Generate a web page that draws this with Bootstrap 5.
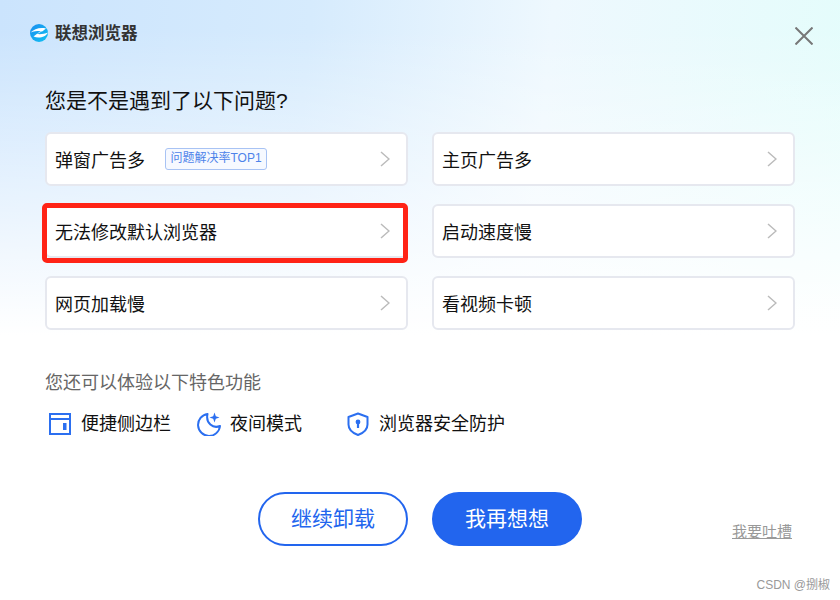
<!DOCTYPE html>
<html lang="zh-CN">
<head>
    <meta charset="UTF-8">
    <meta name="viewport" content="width=device-width, initial-scale=1.0">
    <title>联想浏览器</title>
    <link href="https://cdn.jsdelivr.net/npm/bootstrap@5.3.0/dist/css/bootstrap.min.css" rel="stylesheet">
    <style>
        html, body {
            height: 100%;
        }
        body {
            font-family: "Liberation Sans", "Noto Sans CJK SC", sans-serif;
            color: #111;
            background-color: #fff;
            overflow: hidden;
        }
        .dlg {
            position: relative;
            width: 840px;
            height: 600px;
            padding: 0 45px;
            background:
                linear-gradient(to bottom, rgba(255,255,255,0) 0, rgba(255,255,255,0) 30px, #fff 335px),
                linear-gradient(95deg, #cbe4fd 0%, #d6ebfd 35%, #eef8fe 62%, #e3fdfb 100%);
        }
        .dlg-head {
            height: 86px;
            margin-left: -15px;
            padding-top: 24px;
        }
        .brand-logo {
            width: 18px;
            height: 18px;
            margin-right: 7px;
        }
        .brand-name {
            font-size: 16.5px;
            font-weight: 700;
            line-height: 18px;
            color: #333;
        }
        .close-x {
            position: absolute;
            top: 27px;
            right: 27px;
            width: 18px;
            height: 18px;
        }
        .dlg-title {
            font-size: 21px;
            font-weight: 400;
            line-height: 30px;
            margin: 0 0 16px;
        }
        .issue-grid {
            display: grid;
            grid-template-columns: 363px 363px;
            column-gap: 24px;
            row-gap: 18px;
        }
        .issue {
            position: relative;
            height: 54px;
            padding: 0 16px 0 8px;
            background: #fff;
            border: 2px solid #e6e8ef;
            border-radius: 6px;
            font-size: 18px;
        }
        .issue-name {
            margin-top: 4px;
        }
        .issue-tag {
            margin-left: 20px;
            padding: 0 4.5px;
            height: 22px;
            line-height: 19px;
            font-size: 12px;
            color: #4d83ea;
            border: 1px solid #a8c3f4;
            border-radius: 3px;
            background: #f6f9ff;
        }
        .chev {
            width: 10px;
            height: 16px;
        }
        .red-mark {
            position: absolute;
            left: -5px;
            top: -3px;
            width: 366px;
            height: 60px;
            border: 5px solid #ff2316;
            border-radius: 5px;
            pointer-events: none;
        }
        .sub-title {
            font-size: 18px;
            line-height: 26px;
            color: #666;
            margin: 40px 0 15px;
        }
        .feat {
            font-size: 18px;
            line-height: 26px;
        }
        .feat svg {
            width: 24px;
            height: 24px;
            margin-right: 9px;
        }
        .feat-1 { margin-left: 3px; margin-right: 26px; }
        .feat-2 { margin-right: 44px; }
        .btn-row {
            margin-top: 55px;
            margin-left: 213px;
            gap: 24px;
        }
        .btn-pill {
            width: 150px;
            height: 54px;
            padding: 0;
            font-size: 21px;
            line-height: 50px;
            border-radius: 27px;
            border: 2px solid #2265ee;
        }
        .btn-ghost {
            color: #2265ee;
            background: #fff;
        }
        .btn-solid {
            color: #fff;
            background: #2265ee;
        }
        .tucao {
            position: absolute;
            left: 732px;
            top: 521px;
            font-size: 15px;
            line-height: 22px;
            color: #999;
        }
        .mark-csdn {
            position: absolute;
            right: 10px;
            top: 577px;
            font-size: 12px;
            line-height: 16px;
            color: #999;
        }
    </style>
</head>
<body>

<div class="dlg">
    <div class="dlg-head d-flex align-items-start">
        <svg class="brand-logo" viewBox="0 0 18 18">
            <defs>
                <linearGradient id="lg" x1="0" y1="0" x2="1" y2="1">
                    <stop offset="0" stop-color="#1a8df0"/>
                    <stop offset="1" stop-color="#12c3f2"/>
                </linearGradient>
            </defs>
            <circle cx="9" cy="9" r="9" fill="url(#lg)"/>
            <path d="M0.5 8.5C4 5 10 3 16 4.5L12.5 7.2C9 6.8 4.5 7.2 0.5 8.5Z" fill="#fff"/>
            <path d="M13.5 6.5L7 10C10.5 10.4 14.5 10 18 8.5C16 12.8 9 15 3.5 12.5L10 7.5Z" fill="#fff"/>
        </svg>
        <span class="brand-name">联想浏览器</span>
    </div>
    <svg class="close-x" viewBox="0 0 18 18">
        <path d="M0.5 0.5L17.5 17.5M17.5 0.5L0.5 17.5" stroke="#777" stroke-width="2" fill="none"/>
    </svg>

    <h1 class="dlg-title">您是不是遇到了以下问题?</h1>

    <div class="issue-grid">
        <div class="issue d-flex align-items-center">
            <span class="issue-name">弹窗广告多</span>
            <span class="issue-tag">问题解决率TOP1</span>
            <svg class="chev ms-auto" viewBox="0 0 10 16"><path d="M1 1L9 8L1 15" stroke="#bbb" stroke-width="1.5" fill="none"/></svg>
        </div>
        <div class="issue d-flex align-items-center">
            <span class="issue-name">主页广告多</span>
            <svg class="chev ms-auto" viewBox="0 0 10 16"><path d="M1 1L9 8L1 15" stroke="#bbb" stroke-width="1.5" fill="none"/></svg>
        </div>
        <div class="issue d-flex align-items-center">
            <span class="issue-name">无法修改默认浏览器</span>
            <svg class="chev ms-auto" viewBox="0 0 10 16"><path d="M1 1L9 8L1 15" stroke="#bbb" stroke-width="1.5" fill="none"/></svg>
            <div class="red-mark"></div>
        </div>
        <div class="issue d-flex align-items-center">
            <span class="issue-name">启动速度慢</span>
            <svg class="chev ms-auto" viewBox="0 0 10 16"><path d="M1 1L9 8L1 15" stroke="#bbb" stroke-width="1.5" fill="none"/></svg>
        </div>
        <div class="issue d-flex align-items-center">
            <span class="issue-name">网页加载慢</span>
            <svg class="chev ms-auto" viewBox="0 0 10 16"><path d="M1 1L9 8L1 15" stroke="#bbb" stroke-width="1.5" fill="none"/></svg>
        </div>
        <div class="issue d-flex align-items-center">
            <span class="issue-name">看视频卡顿</span>
            <svg class="chev ms-auto" viewBox="0 0 10 16"><path d="M1 1L9 8L1 15" stroke="#bbb" stroke-width="1.5" fill="none"/></svg>
        </div>
    </div>

    <div class="sub-title">您还可以体验以下特色功能</div>

    <div class="d-flex align-items-center">
        <div class="feat feat-1 d-flex align-items-center">
            <svg viewBox="0 0 24 24">
                <rect x="2" y="2" width="20" height="20" fill="none" stroke="#2b6ff0" stroke-width="2"/>
                <path d="M2 7H22" stroke="#2b6ff0" stroke-width="2"/>
                <rect x="15" y="11" width="3.5" height="7" fill="#2b6ff0"/>
            </svg>
            <span>便捷侧边栏</span>
        </div>
        <div class="feat feat-2 d-flex align-items-center">
            <svg viewBox="0 0 24 24">
                <path d="M10.5 2A11 11 0 1 0 23 14C16 17 8.5 11 10.5 2Z" fill="none" stroke="#2b6ff0" stroke-width="2" stroke-linejoin="round"/>
                <path d="M17.5 0.5L18.8 4.2L22.5 5.5L18.8 6.8L17.5 10.5L16.2 6.8L12.5 5.5L16.2 4.2Z" fill="#2b6ff0"/>
            </svg>
            <span>夜间模式</span>
        </div>
        <div class="feat d-flex align-items-center">
            <svg viewBox="0 0 24 24">
                <path d="M12 1.5L21.5 5V12.5C21.5 17.5 17.5 21 12 23C6.5 21 2.5 17.5 2.5 12.5V5Z" fill="none" stroke="#2b6ff0" stroke-width="2" stroke-linejoin="round"/>
                <circle cx="12" cy="10" r="2.4" fill="#2b6ff0"/>
                <rect x="10.9" y="10" width="2.2" height="6" fill="#2b6ff0"/>
            </svg>
            <span>浏览器安全防护</span>
        </div>
    </div>

    <div class="btn-row d-flex">
        <button class="btn btn-pill btn-ghost" type="button">继续卸载</button>
        <button class="btn btn-pill btn-solid" type="button">我再想想</button>
    </div>

    <a class="tucao" href="#">我要吐槽</a>
    <div class="mark-csdn">CSDN @捌椒</div>
</div>

<script src="https://cdn.jsdelivr.net/npm/bootstrap@5.3.0/dist/js/bootstrap.bundle.min.js"></script>
</body>
</html>
